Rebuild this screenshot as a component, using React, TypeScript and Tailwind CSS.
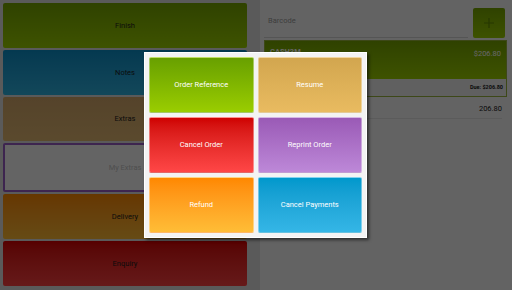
import React from 'react';

type Tile = { label: string; className: string };

const sideButtons: Tile[] = [
  { label: 'Finish', className: 'bg-gradient-to-b from-[#76a500] to-[#9ccf00] text-[#1c1c1c]' },
  { label: 'Notes', className: 'bg-gradient-to-b from-[#0a8fc8] to-[#2fb2e0] text-[#1c1c1c]' },
  { label: 'Extras', className: 'bg-gradient-to-b from-[#d4a86a] to-[#e2b872] text-[#1c1c1c]' },
  { label: 'My Extras', className: 'bg-[#fbfbfb] border-2 border-[#9a5cc6] text-[#c4c4c4]' },
  { label: 'Delivery', className: 'bg-gradient-to-b from-[#ff8a00] to-[#ffbb33] text-[#1c1c1c]' },
  { label: 'Enquiry', className: 'bg-gradient-to-b from-[#d80000] to-[#ff4040] text-[#1c1c1c]' },
];

const dialogButtons: Tile[] = [
  { label: 'Order Reference', className: 'from-[#68a000] to-[#9acd00]' },
  { label: 'Resume', className: 'from-[#d2a64f] to-[#e9bb60]' },
  { label: 'Cancel Order', className: 'from-[#cf0000] to-[#ff4646]' },
  { label: 'Reprint Order', className: 'from-[#9a5ab6] to-[#bd88d8]' },
  { label: 'Refund', className: 'from-[#ff8800] to-[#ffbd36]' },
  { label: 'Cancel Payments', className: 'from-[#0098cc] to-[#34b6e6]' },
];

export default function App() {
  return (
    <div className="relative w-[512px] h-[290px] overflow-hidden flex font-['Roboto','Liberation_Sans',sans-serif]">
      {/* Side buttons */}
      <div className="w-[260px] h-full bg-[#e2e2e2] flex flex-col gap-[2px] pt-[3px] pb-[4px] pl-[3px] pr-[13px]">
        {sideButtons.map((b) => (
          <div
            key={b.label}
            className={`flex-1 rounded-[2px] flex items-center justify-center text-[7.5px] ${b.className}`}
          >
            {b.label}
          </div>
        ))}
      </div>

      {/* Order panel */}
      <div className="flex-1 h-full bg-[#f8f8f8] flex flex-col">
        <div className="flex items-center gap-[5px] pt-[7px] pl-[4px] pr-[7px]">
          <div className="flex-1 h-[31px] border-b border-[#d4d4d4] flex items-center pl-[4px] pb-[2px] text-[7.5px] text-[#9a9a9a]">
            Barcode
          </div>
          <div className="w-[32px] h-[30px] rounded-[2px] bg-gradient-to-b from-[#76a500] to-[#9acd00] flex items-center justify-center">
            <svg width="12" height="12" viewBox="0 0 12 12">
              <path d="M6 1v10M1 6h10" stroke="#5f8a00" strokeWidth="1.2" />
            </svg>
          </div>
        </div>

        <div className="mt-[2px] ml-[4px] mr-[5px] border border-[#9ab53c]">
          <div className="h-[38px] bg-gradient-to-b from-[#76a500] to-[#9ccf00] flex justify-between px-[5px] pt-[5px] text-[7.5px] text-white">
            <span className="font-bold">CASH3M</span>
            <span className="pt-[2px]">$206.80</span>
          </div>
          <div className="h-[17px] bg-[#f1f1f1] flex items-center justify-end pr-[3px] text-[5.5px] font-bold text-[#222]">
            Due: $206.80
          </div>
        </div>

        <div className="ml-[4px] mr-[10px] mt-[3px] h-[19px] border-b border-[#e4e4e4] flex items-center justify-end text-[7.5px] text-[#222]">
          206.80
        </div>
      </div>

      {/* Dim overlay */}
      <div className="absolute inset-0 bg-black/60" />

      {/* Dialog */}
      <div className="absolute left-[144px] top-[52px] w-[223px] bg-[#f3f3f3] border border-white p-[4px] grid grid-cols-2 gap-[4px] shadow-[2px_2px_3px_rgba(0,0,0,0.55)]">
        {dialogButtons.map((b) => (
          <div
            key={b.label}
            className={`h-[56px] rounded-[2px] border border-white/40 bg-gradient-to-b ${b.className} flex items-center justify-center text-[7.5px] text-white`}
          >
            {b.label}
          </div>
        ))}
      </div>
    </div>
  );
}
